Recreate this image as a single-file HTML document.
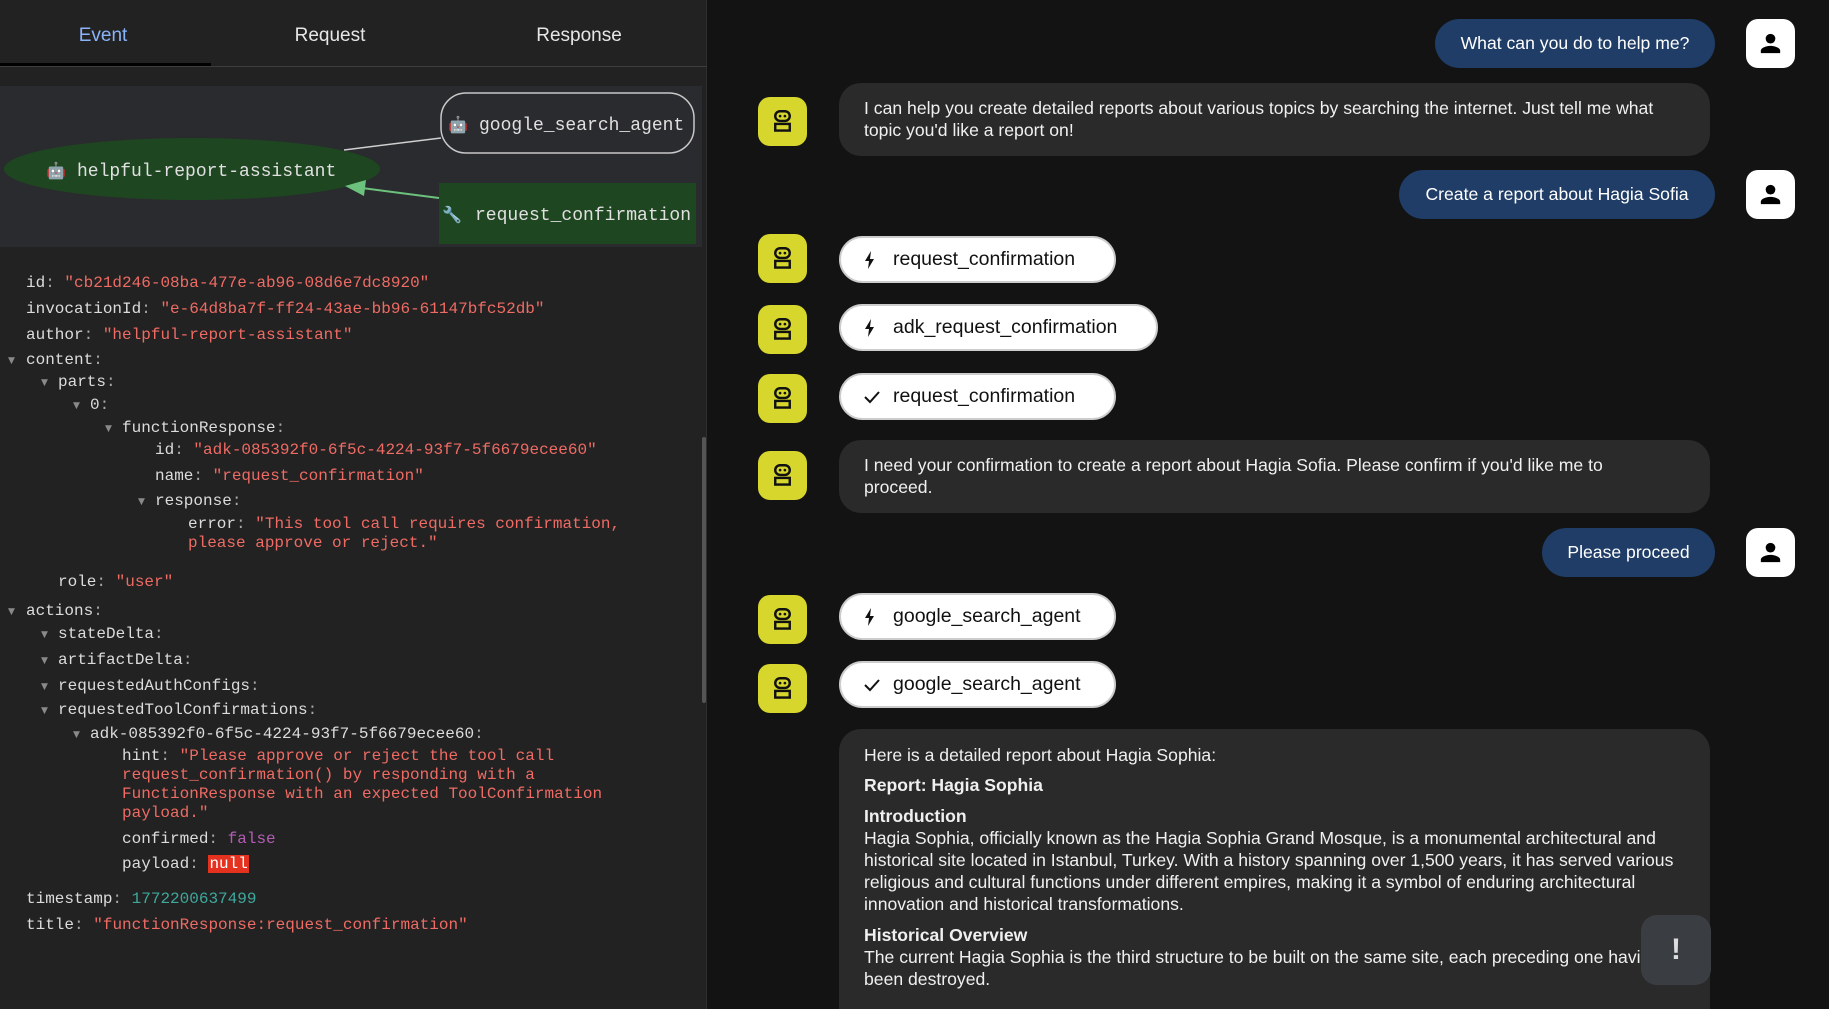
<!DOCTYPE html>
<html><head><meta charset="utf-8"><style>
*{margin:0;padding:0;box-sizing:border-box}
html,body{width:1829px;height:1009px;overflow:hidden}
body{background:#131313;font-family:"Liberation Sans",sans-serif;position:relative}
.left{position:absolute;left:0;top:0;width:707px;height:1009px;background:#222;border-right:1px solid #2e2e2e}
.tab{position:absolute;top:25px;font-size:19px;color:#e6e6e6;transform:translateX(-50%)}
.j{position:absolute;font-family:"Liberation Mono",monospace;font-size:16px;line-height:19px;color:#dcdcdc;white-space:pre}
.j .c{color:#a8a8a8}.s{color:#ef6b64}.n{color:#3fa89c}.f{color:#b35cb5}
.nl{background:#e5321f;color:#fff;padding:0 1px}
.t{position:absolute;font-size:9px;color:#8a8a8a;font-family:"DejaVu Sans",sans-serif}
.av{position:absolute;width:49px;height:49px;border-radius:12px}
.bot{background:#d6d62c;left:758px}
.usr{background:#fff;left:1746px}
.av svg{position:absolute;left:10px;top:10px}
.ub{position:absolute;background:#1f3d66;color:#fff;font-size:17.6px;border-radius:26px;text-align:center;line-height:49px;height:49px}
.bb{position:absolute;left:839px;width:871px;background:#2a2a2a;color:#f0f0f0;font-size:17.6px;line-height:22px;border-radius:22px;padding:0 25px;white-space:nowrap;overflow:hidden}
.pill{position:absolute;left:839px;height:47px;background:#fff;border:2px solid #ccc;border-radius:24px;font-size:19.5px;color:#111;line-height:43px;padding-left:52px}
.pill svg{position:absolute;left:22px;top:12px}
</style></head><body>
<div class="left">
  <div class="tab" style="left:103px;color:#8ab4f8">Event</div>
  <div class="tab" style="left:330px">Request</div>
  <div class="tab" style="left:579px">Response</div>
  <div style="position:absolute;left:0;top:63px;width:211px;height:3px;background:#000"></div>
  <div style="position:absolute;left:0;top:66px;width:707px;height:1px;background:#3d3d3d"></div>
  <svg style="position:absolute;left:0;top:86px" width="702" height="161">
    <rect width="702" height="161" fill="#2a2b2e"/>
    <ellipse cx="192" cy="83" rx="188" ry="31" fill="#1e4620"/>
    <rect x="441" y="7" width="253" height="60" rx="25" fill="none" stroke="#c8c8c8" stroke-width="1.5"/>
    <rect x="439" y="97" width="257" height="61" fill="#1e4620"/>
    <line x1="344" y1="64" x2="441" y2="52" stroke="#cfcfcf" stroke-width="1.5"/>
    <line x1="439" y1="112" x2="362" y2="102" stroke="#6cc27c" stroke-width="2"/>
    <polygon points="345,100 366,94 364,110" fill="#6cc27c"/>
    <text x="46" y="90" font-size="16">🤖</text>
    <text x="77" y="90" font-family="Liberation Mono" font-size="18" fill="#e0e0e0">helpful-report-assistant</text>
    <text x="448" y="44" font-size="16">🤖</text>
    <text x="479" y="44" font-family="Liberation Mono" font-size="18" fill="#e0e0e0">google_search_agent</text>
    <text x="442" y="134" font-size="16">🔧</text>
    <text x="475" y="134" font-family="Liberation Mono" font-size="18" fill="#e0e0e0">request_confirmation</text>
  </svg>
  <div style="position:absolute;left:702px;top:437px;width:4px;height:266px;background:#555;border-radius:2px"></div>

  <div class="j" style="left:26px;top:274px">id<span class="c">:</span> <span class="s">"cb21d246-08ba-477e-ab96-08d6e7dc8920"</span></div>
  <div class="j" style="left:26px;top:300px">invocationId<span class="c">:</span> <span class="s">"e-64d8ba7f-ff24-43ae-bb96-61147bfc52db"</span></div>
  <div class="j" style="left:26px;top:326px">author<span class="c">:</span> <span class="s">"helpful-report-assistant"</span></div>
  <div class="t" style="left:8px;top:356px">▼</div><div class="j" style="left:26px;top:351px">content<span class="c">:</span></div>
  <div class="t" style="left:41px;top:378px">▼</div><div class="j" style="left:58px;top:373px">parts<span class="c">:</span></div>
  <div class="t" style="left:73px;top:401px">▼</div><div class="j" style="left:90px;top:396px">0<span class="c">:</span></div>
  <div class="t" style="left:105px;top:424px">▼</div><div class="j" style="left:122px;top:419px">functionResponse<span class="c">:</span></div>
  <div class="j" style="left:155px;top:441px">id<span class="c">:</span> <span class="s">"adk-085392f0-6f5c-4224-93f7-5f6679ecee60"</span></div>
  <div class="j" style="left:155px;top:467px">name<span class="c">:</span> <span class="s">"request_confirmation"</span></div>
  <div class="t" style="left:138px;top:497px">▼</div><div class="j" style="left:155px;top:492px">response<span class="c">:</span></div>
  <div class="j" style="left:188px;top:515px">error<span class="c">:</span> <span class="s">"This tool call requires confirmation,
please approve or reject."</span></div>
  <div class="j" style="left:58px;top:573px">role<span class="c">:</span> <span class="s">"user"</span></div>
  <div class="t" style="left:8px;top:607px">▼</div><div class="j" style="left:26px;top:602px">actions<span class="c">:</span></div>
  <div class="t" style="left:41px;top:630px">▼</div><div class="j" style="left:58px;top:625px">stateDelta<span class="c">:</span></div>
  <div class="t" style="left:41px;top:656px">▼</div><div class="j" style="left:58px;top:651px">artifactDelta<span class="c">:</span></div>
  <div class="t" style="left:41px;top:682px">▼</div><div class="j" style="left:58px;top:677px">requestedAuthConfigs<span class="c">:</span></div>
  <div class="t" style="left:41px;top:706px">▼</div><div class="j" style="left:58px;top:701px">requestedToolConfirmations<span class="c">:</span></div>
  <div class="t" style="left:73px;top:730px">▼</div><div class="j" style="left:90px;top:725px">adk-085392f0-6f5c-4224-93f7-5f6679ecee60<span class="c">:</span></div>
  <div class="j" style="left:122px;top:747px">hint<span class="c">:</span> <span class="s">"Please approve or reject the tool call
request_confirmation() by responding with a
FunctionResponse with an expected ToolConfirmation
payload."</span></div>
  <div class="j" style="left:122px;top:830px">confirmed<span class="c">:</span> <span class="f">false</span></div>
  <div class="j" style="left:122px;top:855px">payload<span class="c">:</span> <span class="nl">null</span></div>
  <div class="j" style="left:26px;top:890px">timestamp<span class="c">:</span> <span class="n">1772200637499</span></div>
  <div class="j" style="left:26px;top:916px">title<span class="c">:</span> <span class="s">"functionResponse:request_confirmation"</span></div>
</div>

<div class="ub" style="left:1435px;top:19px;width:280px">What can you do to help me?</div>
<div class="av usr" style="top:19px"><svg width="29" height="29" viewBox="0 0 24 24"><circle cx="12" cy="8" r="4" fill="#000"/><path d="M4 20v-2c0-2.7 5.3-4 8-4s8 1.3 8 4v2z" fill="#000"/></svg></div>

<div class="av bot" style="top:97px"><svg width="29" height="29" viewBox="0 0 24 24"><rect x="6" y="3.5" width="12" height="8" rx="4" fill="none" stroke="#111" stroke-width="2"/><circle cx="10" cy="7.5" r="1.1" fill="#111"/><circle cx="14" cy="7.5" r="1.1" fill="#111"/><rect x="6" y="14" width="12" height="5.5" fill="none" stroke="#111" stroke-width="2"/></svg></div>
<div class="bb" style="top:83px;height:73px;padding-top:14px">I can help you create detailed reports about various topics by searching the internet. Just tell me what<br>topic you'd like a report on!</div>

<div class="ub" style="left:1399px;top:170px;width:316px">Create a report about Hagia Sofia</div>
<div class="av usr" style="top:170px"><svg width="29" height="29" viewBox="0 0 24 24"><circle cx="12" cy="8" r="4" fill="#000"/><path d="M4 20v-2c0-2.7 5.3-4 8-4s8 1.3 8 4v2z" fill="#000"/></svg></div>

<div class="av bot" style="top:234px"><svg width="29" height="29" viewBox="0 0 24 24"><rect x="6" y="3.5" width="12" height="8" rx="4" fill="none" stroke="#111" stroke-width="2"/><circle cx="10" cy="7.5" r="1.1" fill="#111"/><circle cx="14" cy="7.5" r="1.1" fill="#111"/><rect x="6" y="14" width="12" height="5.5" fill="none" stroke="#111" stroke-width="2"/></svg></div>
<div class="pill" style="top:236px;width:277px"><svg width="14" height="20" viewBox="0 0 14 20"><path d="M8 1L2 11h4l-1 8 6-10H7z" fill="#111"/></svg>request_confirmation</div>

<div class="av bot" style="top:305px"><svg width="29" height="29" viewBox="0 0 24 24"><rect x="6" y="3.5" width="12" height="8" rx="4" fill="none" stroke="#111" stroke-width="2"/><circle cx="10" cy="7.5" r="1.1" fill="#111"/><circle cx="14" cy="7.5" r="1.1" fill="#111"/><rect x="6" y="14" width="12" height="5.5" fill="none" stroke="#111" stroke-width="2"/></svg></div>
<div class="pill" style="top:304px;width:319px"><svg width="14" height="20" viewBox="0 0 14 20"><path d="M8 1L2 11h4l-1 8 6-10H7z" fill="#111"/></svg>adk_request_confirmation</div>

<div class="av bot" style="top:374px"><svg width="29" height="29" viewBox="0 0 24 24"><rect x="6" y="3.5" width="12" height="8" rx="4" fill="none" stroke="#111" stroke-width="2"/><circle cx="10" cy="7.5" r="1.1" fill="#111"/><circle cx="14" cy="7.5" r="1.1" fill="#111"/><rect x="6" y="14" width="12" height="5.5" fill="none" stroke="#111" stroke-width="2"/></svg></div>
<div class="pill" style="top:373px;width:277px"><svg width="18" height="20" viewBox="0 0 18 20"><path d="M2 10l5 5 9-10" fill="none" stroke="#111" stroke-width="2"/></svg>request_confirmation</div>

<div class="av bot" style="top:451px"><svg width="29" height="29" viewBox="0 0 24 24"><rect x="6" y="3.5" width="12" height="8" rx="4" fill="none" stroke="#111" stroke-width="2"/><circle cx="10" cy="7.5" r="1.1" fill="#111"/><circle cx="14" cy="7.5" r="1.1" fill="#111"/><rect x="6" y="14" width="12" height="5.5" fill="none" stroke="#111" stroke-width="2"/></svg></div>
<div class="bb" style="top:440px;height:73px;padding-top:14px">I need your confirmation to create a report about Hagia Sofia. Please confirm if you'd like me to<br>proceed.</div>

<div class="ub" style="left:1542px;top:528px;width:173px">Please proceed</div>
<div class="av usr" style="top:528px"><svg width="29" height="29" viewBox="0 0 24 24"><circle cx="12" cy="8" r="4" fill="#000"/><path d="M4 20v-2c0-2.7 5.3-4 8-4s8 1.3 8 4v2z" fill="#000"/></svg></div>

<div class="av bot" style="top:595px"><svg width="29" height="29" viewBox="0 0 24 24"><rect x="6" y="3.5" width="12" height="8" rx="4" fill="none" stroke="#111" stroke-width="2"/><circle cx="10" cy="7.5" r="1.1" fill="#111"/><circle cx="14" cy="7.5" r="1.1" fill="#111"/><rect x="6" y="14" width="12" height="5.5" fill="none" stroke="#111" stroke-width="2"/></svg></div>
<div class="pill" style="top:593px;width:277px"><svg width="14" height="20" viewBox="0 0 14 20"><path d="M8 1L2 11h4l-1 8 6-10H7z" fill="#111"/></svg>google_search_agent</div>

<div class="av bot" style="top:664px"><svg width="29" height="29" viewBox="0 0 24 24"><rect x="6" y="3.5" width="12" height="8" rx="4" fill="none" stroke="#111" stroke-width="2"/><circle cx="10" cy="7.5" r="1.1" fill="#111"/><circle cx="14" cy="7.5" r="1.1" fill="#111"/><rect x="6" y="14" width="12" height="5.5" fill="none" stroke="#111" stroke-width="2"/></svg></div>
<div class="pill" style="top:661px;width:277px"><svg width="18" height="20" viewBox="0 0 18 20"><path d="M2 10l5 5 9-10" fill="none" stroke="#111" stroke-width="2"/></svg>google_search_agent</div>

<div class="bb" style="top:729px;height:280px;padding-top:15px;border-radius:22px 22px 0 0">
  <div>Here is a detailed report about Hagia Sophia:</div>
  <div style="font-weight:bold;margin-top:8px">Report: Hagia Sophia</div>
  <div style="font-weight:bold;margin-top:9px">Introduction</div>
  <div>Hagia Sophia, officially known as the Hagia Sophia Grand Mosque, is a monumental architectural and<br>historical site located in Istanbul, Turkey. With a history spanning over 1,500 years, it has served various<br>religious and cultural functions under different empires, making it a symbol of enduring architectural<br>innovation and historical transformations.</div>
  <div style="font-weight:bold;margin-top:9px">Historical Overview</div>
  <div>The current Hagia Sophia is the third structure to be built on the same site, each preceding one having<br>been destroyed.</div>
</div>
<div style="position:absolute;left:1641px;top:915px;width:70px;height:70px;border-radius:16px;background:#3a3d42;color:#ddd;font-size:30px;font-weight:bold;text-align:center;line-height:70px">!</div>
</body></html>
